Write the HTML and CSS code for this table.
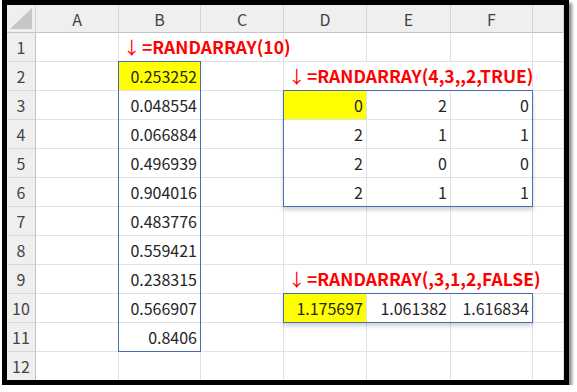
FILE: index.html
```html
<!DOCTYPE html>
<html lang="ja">
<head>
<meta charset="utf-8">
<link rel="stylesheet" href="styles.css">
</head>
<body>
<div class="frame">
  <div class="stack">
  <div class="sheet">
    <!-- header row -->
    <div class="corner"><svg class="tri" width="22" height="21" viewBox="0 0 22 21"><polygon points="22,0 22,21 0,21" fill="#c6c6c6"/></svg></div>
    <div class="colhdr">A</div>
    <div class="colhdr">B</div>
    <div class="colhdr">C</div>
    <div class="colhdr">D</div>
    <div class="colhdr">E</div>
    <div class="colhdr">F</div>
    <div class="colhdr"></div>

    <!-- row 1 -->
    <div class="rowhdr">1</div>
    <div class="cell"></div>
    <div class="cell formula span2"><span class="arrow">↓</span><span>=RANDARRAY(10)</span></div>
    <div class="cell"></div>
    <div class="cell"></div>
    <div class="cell"></div>
    <div class="cell"></div>

    <!-- row 2 -->
    <div class="rowhdr">2</div>
    <div class="cell"></div>
    <div class="cell num yellow">0.253252</div>
    <div class="cell"></div>
    <div class="cell formula span3"><span class="arrow">↓</span><span>=RANDARRAY(4,3,,2,TRUE)</span></div>
    <div class="cell"></div>

    <!-- row 3 -->
    <div class="rowhdr">3</div>
    <div class="cell"></div>
    <div class="cell num">0.048554</div>
    <div class="cell"></div>
    <div class="cell num yellow">0</div>
    <div class="cell num">2</div>
    <div class="cell num">0</div>
    <div class="cell"></div>

    <!-- row 4 -->
    <div class="rowhdr">4</div>
    <div class="cell"></div>
    <div class="cell num">0.066884</div>
    <div class="cell"></div>
    <div class="cell num">2</div>
    <div class="cell num">1</div>
    <div class="cell num">1</div>
    <div class="cell"></div>

    <!-- row 5 -->
    <div class="rowhdr">5</div>
    <div class="cell"></div>
    <div class="cell num">0.496939</div>
    <div class="cell"></div>
    <div class="cell num">2</div>
    <div class="cell num">0</div>
    <div class="cell num">0</div>
    <div class="cell"></div>

    <!-- row 6 -->
    <div class="rowhdr">6</div>
    <div class="cell"></div>
    <div class="cell num">0.904016</div>
    <div class="cell"></div>
    <div class="cell num">2</div>
    <div class="cell num">1</div>
    <div class="cell num">1</div>
    <div class="cell"></div>

    <!-- row 7 -->
    <div class="rowhdr">7</div>
    <div class="cell"></div>
    <div class="cell num">0.483776</div>
    <div class="cell"></div>
    <div class="cell"></div>
    <div class="cell"></div>
    <div class="cell"></div>
    <div class="cell"></div>

    <!-- row 8 -->
    <div class="rowhdr">8</div>
    <div class="cell"></div>
    <div class="cell num">0.559421</div>
    <div class="cell"></div>
    <div class="cell"></div>
    <div class="cell"></div>
    <div class="cell"></div>
    <div class="cell"></div>

    <!-- row 9 -->
    <div class="rowhdr">9</div>
    <div class="cell"></div>
    <div class="cell num">0.238315</div>
    <div class="cell"></div>
    <div class="cell formula span4"><span class="arrow">↓</span><span>=RANDARRAY(,3,1,2,FALSE)</span></div>

    <!-- row 10 -->
    <div class="rowhdr">10</div>
    <div class="cell"></div>
    <div class="cell num">0.566907</div>
    <div class="cell"></div>
    <div class="cell num yellow">1.175697</div>
    <div class="cell num">1.061382</div>
    <div class="cell num">1.616834</div>
    <div class="cell"></div>

    <!-- row 11 -->
    <div class="rowhdr">11</div>
    <div class="cell"></div>
    <div class="cell num">0.8406</div>
    <div class="cell"></div>
    <div class="cell"></div>
    <div class="cell"></div>
    <div class="cell"></div>
    <div class="cell"></div>

    <!-- row 12 -->
    <div class="rowhdr">12</div>
    <div class="cell"></div>
    <div class="cell"></div>
    <div class="cell"></div>
    <div class="cell"></div>
    <div class="cell"></div>
    <div class="cell"></div>
    <div class="cell"></div>
  </div>

  <!-- range outlines, laid over the sheet on the same grid -->
  <div class="sheet ranges">
    <div class="range range-b"></div>
    <div class="range range-d1 shadow"></div>
    <div class="range range-d2 shadow"></div>
  </div>
  </div>
</div>
</body>
</html>
```
FILE: styles.css
```css
html, body {
  margin: 0;
  padding: 0;
  background: #ffffff;
}

.frame {
  margin: 0 0 0 2px;
  width: 557px;
  height: 375px;
  border: 5px solid #000;
  box-shadow: 3px 3px 3px rgba(0, 0, 0, 0.45);
  overflow: hidden;
  background: #fff;
}

.stack {
  display: grid;
}

.stack > .sheet {
  grid-area: 1 / 1;
}

.sheet {
  display: grid;
  grid-template-columns: 29px 83px 82px 83px 83px 84px 82px 31px;
  grid-template-rows: 28px repeat(12, 29px);
  font-family: "Noto Sans CJK JP", "Noto Sans", sans-serif;
  font-size: 16px;
  color: #262626;
}

.ranges {
  pointer-events: none;
  z-index: 1;
}

.corner {
  background: #efefef;
  border-right: 1px solid #d4d4d4;
  border-bottom: 1px solid #c4c4c4;
  display: flex;
  align-items: flex-end;
  justify-content: flex-end;
  padding: 0 3px 3px 0;
}

.tri { display: block; }

.colhdr {
  background: #efefef;
  border-right: 1px solid #d4d4d4;
  border-bottom: 1px solid #c4c4c4;
  display: flex;
  align-items: center;
  justify-content: center;
  color: #444;
  font-size: 16px;
  line-height: 1;
}

.rowhdr {
  background: #efefef;
  border-right: 1px solid #c4c4c4;
  border-bottom: 1px solid #d9d9d9;
  display: flex;
  align-items: center;
  justify-content: center;
  color: #444;
  font-size: 16px;
  line-height: 1;
}

.cell {
  border-right: 1px solid #e1e1e1;
  border-bottom: 1px solid #e1e1e1;
  display: flex;
  align-items: center;
  white-space: nowrap;
  line-height: 1;
  min-width: 0;
}

.num {
  justify-content: flex-end;
  padding-right: 3px;
  font-size: 16px;
  color: #262626;
}

.yellow { background: #ffff00; }

.formula {
  color: #ff0000;
  font-weight: bold;
  font-size: 17.5px;
  padding-left: 4px;
  overflow: visible;
}

.arrow {
  font-weight: normal;
  display: inline-block;
  width: 15px;
  margin-right: 4px;
  text-align: center;
}

.span2 { grid-column: span 2; }
.span3 { grid-column: span 3; }
.span4 { grid-column: span 4; }

.range {
  border: 1px solid #4a6cb0;
  margin: -1px 0 0 -1px;
}

.range-b { grid-column: 3 / 4; grid-row: 3 / 13; }
.range-d1 { grid-column: 5 / 8; grid-row: 4 / 8; }
.range-d2 { grid-column: 5 / 8; grid-row: 11 / 12; }

.shadow { box-shadow: 0 3px 4px rgba(0, 0, 0, 0.18); }
```
